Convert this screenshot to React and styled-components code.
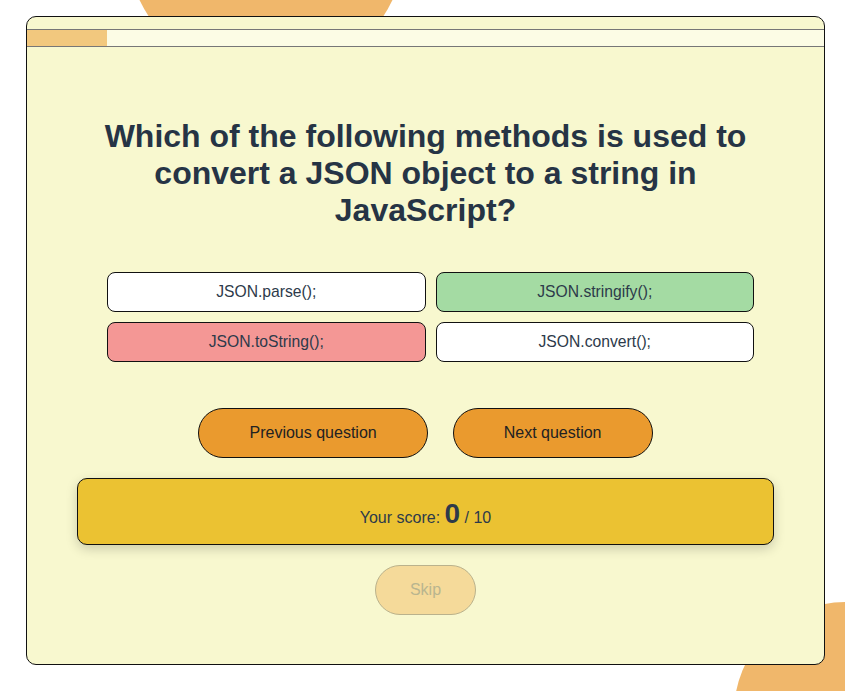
import styled, { createGlobalStyle } from "styled-components";

const answers = [
  { text: "JSON.parse();", state: "idle" },
  { text: "JSON.stringify();", state: "correct" },
  { text: "JSON.toString();", state: "wrong" },
  { text: "JSON.convert();", state: "idle" },
];

const answerColors = {
  idle: "#ffffff",
  correct: "#a4dba3",
  wrong: "#f49795",
};

const App = () => {
  return (
    <Page>
      <GlobalStyle />
      <Blob $size={280} $left={126} $top={-200} />
      <Blob $size={222} $left={734} $top={602} />
      <Card>
        <Progress>
          <ProgressFill style={{ width: `${(1 / 10) * 100}%` }} />
        </Progress>
        <Question>
          Which of the following methods is used to convert a JSON object to a
          string in JavaScript?
        </Question>
        <Answers>
          {answers.map((a) => (
            <AnswerBtn key={a.text} $state={a.state}>
              {a.text}
            </AnswerBtn>
          ))}
        </Answers>
        <Nav>
          <NavBtn>Previous question</NavBtn>
          <NavBtn>Next question</NavBtn>
        </Nav>
        <Score>
          Your score:&nbsp;<ScoreValue>0</ScoreValue>&nbsp;/ 10
        </Score>
        <SkipRow>
          <SkipBtn disabled>Skip</SkipBtn>
        </SkipRow>
      </Card>
    </Page>
  );
};

const GlobalStyle = createGlobalStyle`
  body {
    margin: 0;
    background: #fff;
    font-family: "Liberation Sans", Arial, sans-serif;
  }
  * {
    box-sizing: border-box;
  }
`;

const Page = styled.div`
  position: relative;
  width: 100%;
  height: 691px;
  overflow: hidden;
  padding: 16px 20px 0 26px;
`;

const Blob = styled.div`
  position: absolute;
  width: ${(p) => p.$size}px;
  height: ${(p) => p.$size}px;
  left: ${(p) => p.$left}px;
  top: ${(p) => p.$top}px;
  border-radius: 50%;
  background: #f0b76b;
`;

const Card = styled.div`
  position: relative;
  z-index: 1;
  width: 799px;
  height: 649px;
  padding-top: 12px;
  border: 1px solid #111;
  border-radius: 10px;
  background: #f8f8cf;
`;

const Progress = styled.div`
  height: 18px;
  border-top: 1px solid #777;
  border-bottom: 1px solid #777;
  background: #fcfce5;
`;

const ProgressFill = styled.div`
  height: 100%;
  background: #f2c87e;
`;

const Question = styled.h1`
  max-width: 700px;
  margin: 71px auto 43px;
  font-size: 32px;
  line-height: 37px;
  font-weight: 700;
  text-align: center;
  color: #263445;
`;

const Answers = styled.div`
  display: grid;
  grid-template-columns: 1fr 1fr;
  gap: 10px;
  padding: 0 70px 0 80px;
`;

const AnswerBtn = styled.button`
  height: 40px;
  border: 1px solid #111;
  border-radius: 8px;
  background: ${(p) => answerColors[p.$state]};
  font-family: inherit;
  font-size: 15.7px;
  color: #2d3a4a;
  cursor: pointer;
`;

const Nav = styled.div`
  display: flex;
  justify-content: center;
  gap: 25px;
  margin-top: 46px;
`;

const NavBtn = styled.button`
  height: 50px;
  padding: 0 50px;
  border: 1px solid #111;
  border-radius: 25px;
  background: #ea9a2e;
  font-family: inherit;
  font-size: 16px;
  color: #222;
  cursor: pointer;
`;

const Score = styled.div`
  display: flex;
  align-items: baseline;
  justify-content: center;
  height: 67px;
  margin: 20px 50px 0;
  padding-top: 19px;
  border: 1px solid #111;
  border-radius: 10px;
  background: #ebc232;
  box-shadow: 0 4px 12px rgba(0, 0, 0, 0.18);
  font-size: 16px;
  color: #2d3a4a;
`;

const ScoreValue = styled.span`
  font-size: 28px;
  font-weight: 700;
`;

const SkipRow = styled.div`
  display: flex;
  justify-content: center;
  margin-top: 20px;
`;

const SkipBtn = styled.button`
  height: 50px;
  padding: 0 34px;
  border: 1px solid #bab28c;
  border-radius: 25px;
  background: #f5da9a;
  font-family: inherit;
  font-size: 16px;
  color: #b9b58f;
`;

export default App;
